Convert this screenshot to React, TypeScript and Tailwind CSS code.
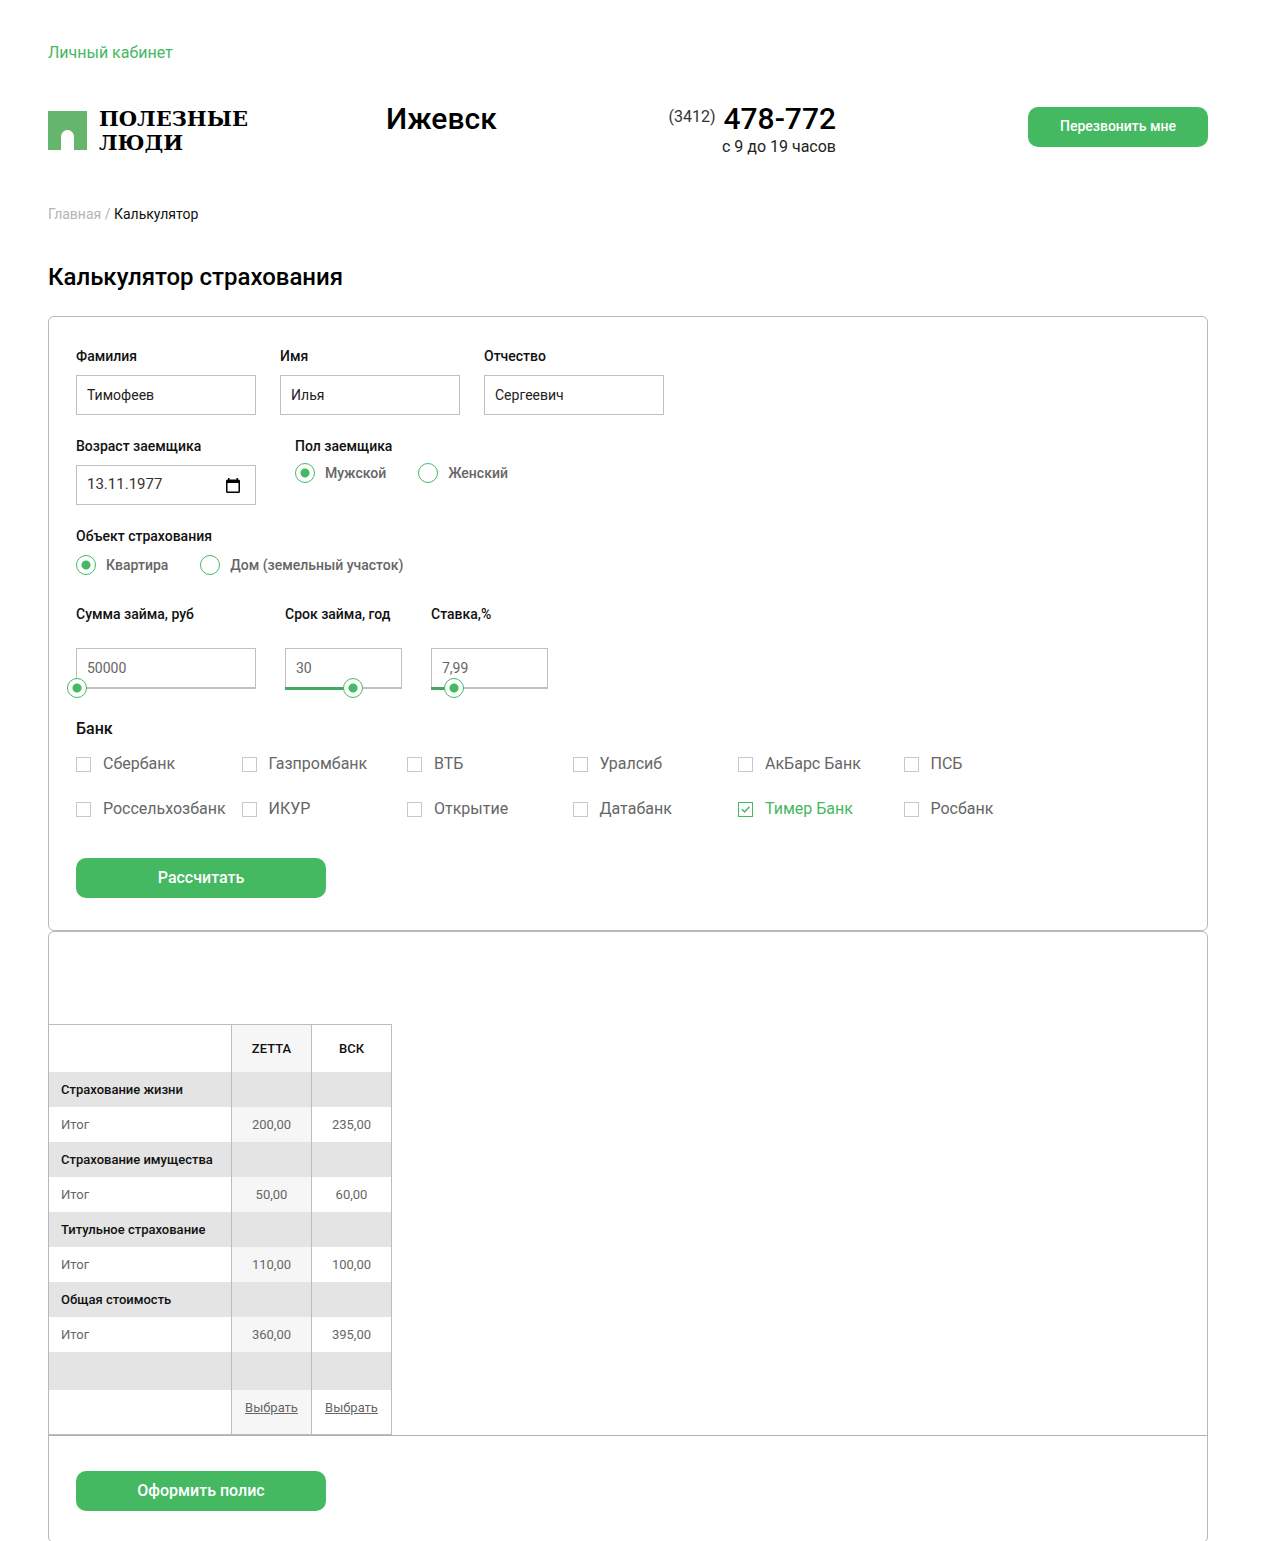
import { useId, useState } from "react";

const BANKS = [
  "Сбербанк",
  "Газпромбанк",
  "ВТБ",
  "Уралсиб",
  "АкБарс Банк",
  "ПСБ",
  "Россельхозбанк",
  "ИКУР",
  "Открытие",
  "Датабанк",
  "Тимер Банк",
  "Росбанк",
];

const GROUPS = [
  { title: "Страхование жизни", zetta: "200,00", vsk: "235,00" },
  { title: "Страхование имущества", zetta: "50,00", vsk: "60,00" },
  { title: "Титульное страхование", zetta: "110,00", vsk: "100,00" },
  { title: "Общая стоимость", zetta: "360,00", vsk: "395,00" },
];

const LABEL = "block text-[14px] leading-5 font-medium text-[#111]";
const FIELD =
  "block h-10 w-full border border-[#c0c0c0] bg-white px-[10px] text-[14px] outline-none focus:border-[#45b862]";
const BUTTON = "h-10 rounded-[10px] bg-[#45b862] text-white hover:bg-[#3ba757]";

function Logo() {
  return (
    <a href="#" className="flex items-start gap-3">
      <svg width="39" height="39" viewBox="0 0 39 39" className="mt-1 shrink-0" aria-hidden="true">
        <path d="M0 0H39V39H26V25.5A6.5 6.5 0 0 0 13 25.5V39H0Z" fill="#66b56c" />
      </svg>
      <span className="font-['DejaVu_Serif',serif] text-[21px] leading-6 font-bold text-black">
        ПОЛЕЗНЫЕ
        <br />
        ЛЮДИ
      </span>
    </a>
  );
}

function TextField({ label, value }: { label: string; value: string }) {
  const id = useId();
  return (
    <div className="w-[180px]">
      <label htmlFor={id} className={LABEL}>
        {label}
      </label>
      <input id={id} type="text" defaultValue={value} className={`${FIELD} mt-[9px] text-[#222]`} />
    </div>
  );
}

function Radio({ name, label, checked }: { name: string; label: string; checked?: boolean }) {
  return (
    <label className="flex items-center gap-[10px] text-[14px] leading-5 font-medium text-[#666]">
      <input
        type="radio"
        name={name}
        defaultChecked={checked}
        className="size-5 shrink-0 appearance-none rounded-full border border-[#45b862] bg-white checked:bg-[radial-gradient(circle,#45b862_4px,transparent_5px)]"
      />
      {label}
    </label>
  );
}

function SliderField({
  label,
  value,
  start,
  width,
}: {
  label: string;
  value: string;
  start: number;
  width: string;
}) {
  const id = useId();
  const [position, setPosition] = useState(start);
  return (
    <div className={width}>
      <label htmlFor={id} className={LABEL}>
        {label}
      </label>
      <div className="relative mt-6">
        <input id={id} type="text" defaultValue={value} className={`${FIELD} text-[#666]`} />
        <div className="absolute inset-x-0 top-[39px] h-[2px] bg-[#c0c0c0]">
          <div className="h-[3px] bg-[#45a862]" style={{ width: `${position}%` }} />
        </div>
        <input
          type="range"
          aria-label={label}
          min={0}
          max={100}
          value={position}
          onChange={(e) => setPosition(Number(e.target.value))}
          className="absolute top-[30px] -left-[9px] h-5 w-[calc(100%+18px)] appearance-none bg-transparent [&::-webkit-slider-thumb]:size-5 [&::-webkit-slider-thumb]:appearance-none [&::-webkit-slider-thumb]:rounded-full [&::-webkit-slider-thumb]:border [&::-webkit-slider-thumb]:border-[#45b862] [&::-webkit-slider-thumb]:bg-white [&::-webkit-slider-thumb]:bg-[radial-gradient(circle,#45b862_4px,transparent_5px)]"
        />
      </div>
    </div>
  );
}

function Bank({ name }: { name: string }) {
  return (
    <label className="flex items-center gap-3 text-[16px] leading-5 whitespace-nowrap text-[#666] has-checked:text-[#45b862]">
      <span className="grid size-[15px] shrink-0">
        <input
          type="checkbox"
          defaultChecked={name === "Тимер Банк"}
          className="peer col-start-1 row-start-1 size-[15px] appearance-none border border-[#c8c8c8] bg-white checked:border-[#45b862]"
        />
        <svg
          viewBox="0 0 15 15"
          className="pointer-events-none invisible col-start-1 row-start-1 size-[15px] peer-checked:visible"
          fill="none"
          stroke="#45b862"
          strokeWidth="1.5"
          aria-hidden="true"
        >
          <path d="M4 7.2 6.6 9.9 11.4 4.8" />
        </svg>
      </span>
      {name}
    </label>
  );
}

function PriceTable() {
  const cell = "border-l border-[#bdbdbd] text-center";
  return (
    <table className="w-[343px] table-fixed border-separate border-spacing-0 border-t border-r border-b border-[#bdbdbd] text-[13px] leading-5 text-[#666]">
      <colgroup>
        <col className="w-[182px]" />
        <col className="w-[80px]" />
        <col className="w-[80px]" />
      </colgroup>
      <thead>
        <tr className="h-[47px] text-[#111]">
          <td />
          <th scope="col" className={`${cell} bg-[#f6f6f6] font-medium`}>ZETTA</th>
          <th scope="col" className={`${cell} font-medium`}>ВСК</th>
        </tr>
      </thead>
      {GROUPS.map((group) => (
        <tbody key={group.title}>
          <tr className="h-[35px] bg-[#e4e4e4]">
            <th scope="rowgroup" className="pl-3 text-left font-medium whitespace-nowrap text-[#111]">
              {group.title}
            </th>
            <td className={cell} />
            <td className={cell} />
          </tr>
          <tr className="h-[35px]">
            <th scope="row" className="pl-3 text-left font-normal">Итог</th>
            <td className={`${cell} bg-[#f6f6f6]`}>{group.zetta}</td>
            <td className={cell}>{group.vsk}</td>
          </tr>
        </tbody>
      ))}
      <tbody>
        <tr className="h-[38px] bg-[#e4e4e4]">
          <td />
          <td className={cell} />
          <td className={cell} />
        </tr>
        <tr className="h-[44px]">
          <td />
          <td className={`${cell} bg-[#f6f6f6] pb-2`}>
            <a href="#zetta" className="underline">Выбрать</a>
          </td>
          <td className={`${cell} pb-2`}>
            <a href="#vsk" className="underline">Выбрать</a>
          </td>
        </tr>
      </tbody>
    </table>
  );
}

export default function App() {
  return (
    <div className="bg-white pr-[63px] pl-12 font-['Roboto',sans-serif] text-black">
      <div className="pt-[41px] text-[16px] leading-6">
        <a href="#cabinet" className="text-[#45b862]">Личный кабинет</a>
      </div>

      <header className="mt-[42px] grid grid-cols-[338fr_281fr_169fr_372fr] items-start">
        <Logo />
        <div className="text-[30px] leading-6 font-medium">Ижевск</div>
        <div className="text-right whitespace-nowrap">
          <div className="flex items-start justify-end gap-2 leading-6">
            <span className="text-[16px] leading-5 text-[#333]">(3412)</span>
            <a href="tel:+73412478772" className="text-[30px] font-medium">478-772</a>
          </div>
          <div className="mt-1 text-[16px] leading-6 text-[#222]">с 9 до 19 часов</div>
        </div>
        <button type="button" className={`${BUTTON} w-[180px] justify-self-end pb-[2px] text-[14px] font-medium`}>
          Перезвонить мне
        </button>
      </header>

      <nav aria-label="Навигация" className="mt-[45px] text-[14px] leading-5 text-[#b5b5b5]">
        <a href="#">Главная</a> / <span className="text-[#111]">Калькулятор</span>
      </nav>

      <h1 className="mt-[37px] text-[24px] leading-8 font-medium">Калькулятор страхования</h1>

      <form
        className="mt-[23px] rounded-md border border-[#b8b8b8] px-[27px] pt-[29px] pb-8"
        onSubmit={(e) => e.preventDefault()}
      >
        <div className="flex flex-wrap gap-6">
          <TextField label="Фамилия" value="Тимофеев" />
          <TextField label="Имя" value="Илья" />
          <TextField label="Отчество" value="Сергеевич" />
        </div>

        <div className="mt-[21px] flex flex-wrap gap-[39px]">
          <div className="w-[180px]">
            <label htmlFor="birth" className={LABEL}>Возраст заемщика</label>
            <div className="mt-[9px] flex h-10 items-center border border-[#c0c0c0] pr-[15px] pl-[10px]">
              <input
                id="birth"
                type="text"
                defaultValue="13.11.1977"
                className="w-full min-w-0 pb-[2px] text-[15px] text-[#333] outline-none"
              />
              <button type="button" aria-label="Открыть календарь" className="shrink-0">
                <svg width="14" height="15" viewBox="0 0 14 15" aria-hidden="true">
                  <path
                    d="M2 0H3.5V1.5H10.5V0H12V1.5H12.5A1.5 1.5 0 0 1 14 3V13.5A1.5 1.5 0 0 1 12.5 15H1.5A1.5 1.5 0 0 1 0 13.5V3A1.5 1.5 0 0 1 1.5 1.5H2ZM1.5 5V13.5H12.5V5Z"
                    fill="#000"
                    fillRule="evenodd"
                  />
                </svg>
              </button>
            </div>
          </div>
          <fieldset>
            <legend className={LABEL}>Пол заемщика</legend>
            <div className="mt-[7px] flex gap-8">
              <Radio name="sex" label="Мужской" checked />
              <Radio name="sex" label="Женский" />
            </div>
          </fieldset>
        </div>

        <fieldset className="mt-[21px]">
          <legend className={LABEL}>Объект страхования</legend>
          <div className="mt-[9px] flex gap-8">
            <Radio name="object" label="Квартира" checked />
            <Radio name="object" label="Дом (земельный участок)" />
          </div>
        </fieldset>

        <div className="mt-[29px] flex flex-wrap gap-[29px]">
          <SliderField label="Сумма займа, руб" value="50000" start={0} width="w-[180px]" />
          <SliderField label="Срок займа, год" value="30" start={58} width="w-[117px]" />
          <SliderField label="Ставка,%" value="7,99" start={19} width="w-[117px]" />
        </div>

        <fieldset className="mt-[31px]">
          <legend className="text-[16px] leading-5 font-medium text-[#111]">Банк</legend>
          <div className="mt-[15px] grid max-w-[993px] grid-cols-6 gap-y-[25px]">
            {BANKS.map((name) => (
              <Bank key={name} name={name} />
            ))}
          </div>
        </fieldset>

        <button type="submit" className={`${BUTTON} mt-[39px] block w-[250px] text-[16px] font-medium`}>
          Рассчитать
        </button>
      </form>

      <section className="rounded-md border border-[#b8b8b8]">
        <div className="border-b border-[#b0b0b0] pt-[92px]">
          <PriceTable />
        </div>
        <div className="px-[27px] pt-[35px] pb-[31px]">
          <button type="button" className={`${BUTTON} block w-[250px] text-[16px] font-medium`}>
            Оформить полис
          </button>
        </div>
      </section>
    </div>
  );
}
